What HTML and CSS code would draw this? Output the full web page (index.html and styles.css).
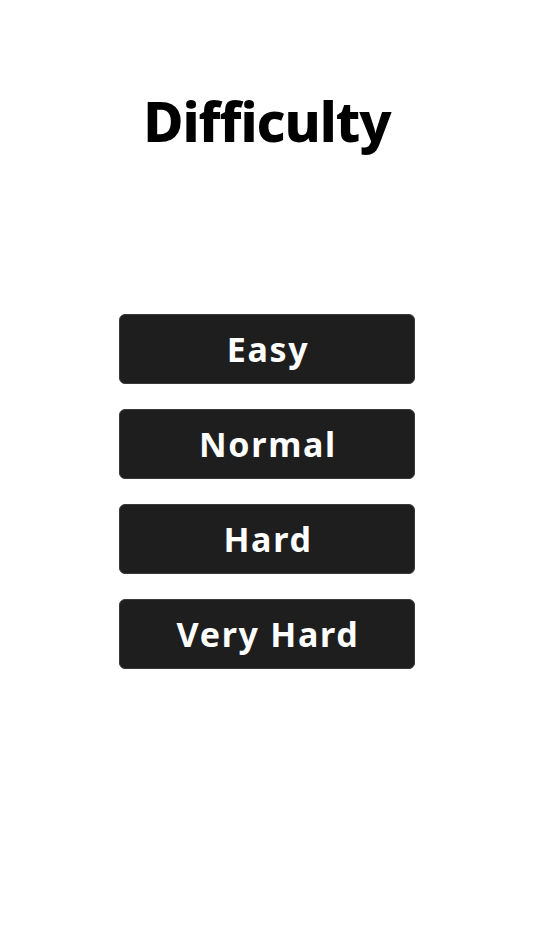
FILE: index.html
```html
<!DOCTYPE html>
<html>
<head>
<meta charset="utf-8">
<link rel="stylesheet" href="styles.css">
</head>
<body>
<main class="screen">
  <h1 class="title">Difficulty</h1>
  <div class="menu">
    <button class="btn">Easy</button>
    <button class="btn">Normal</button>
    <button class="btn">Hard</button>
    <button class="btn">Very Hard</button>
  </div>
</main>
</body>
</html>
```
FILE: styles.css
```css
html, body {
  margin: 0;
  padding: 0;
  background: #ffffff;
}
.screen {
  width: 534px;
  height: 950px;
  display: flex;
  flex-direction: column;
  align-items: center;
  font-family: "Noto Sans", "Open Sans", sans-serif;
}
.title {
  margin: 88px 0 0 0;
  font-size: 55px;
  line-height: 66px;
  font-weight: 800;
  color: #000;
  letter-spacing: -1px;
}
.menu {
  margin-top: 160px;
  display: flex;
  flex-direction: column;
  gap: 25px;
}
.btn {
  width: 296px;
  height: 70px;
  background: #1e1e1e;
  border: 1px solid #3a3a3a;
  border-radius: 6px;
  color: #fff;
  font-family: "Noto Sans", "Open Sans", sans-serif;
  font-size: 34px;
  font-weight: 700;
  letter-spacing: 1.7px;
  padding: 0 0 0 2px;
  display: flex;
  align-items: center;
  justify-content: center;
}
```
